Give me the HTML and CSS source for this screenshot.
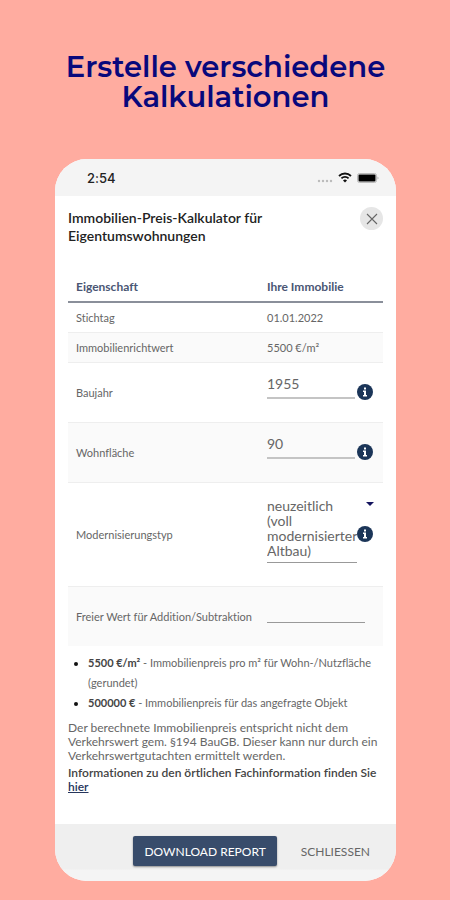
FILE: index.html
```html
<!DOCTYPE html>
<html lang="de">

<head>
    <meta charset="UTF-8">
    <meta name="viewport" content="width=device-width, initial-scale=1.0">
    <title>Immobilien-Preis-Kalkulator</title>
    <link rel="stylesheet" href="styles.css">
</head>

<body>
    <h1>Erstelle verschiedene Kalkulationen</h1>

    <main class="phone">
        <div class="status-bar">
            <span class="time">2:54</span>
            <div class="status-icons">
                <svg class="signal" width="16" height="4" viewBox="0 0 16 4" fill="#bbb">
                    <circle cx="2" cy="2" r="1.2"/>
                    <circle cx="6" cy="2" r="1.2"/>
                    <circle cx="10" cy="2" r="1.2"/>
                    <circle cx="14" cy="2" r="1.2"/>
                </svg>
                <svg width="14" height="11" viewBox="0 0 14 11" fill="none" stroke="#111" stroke-width="1.8">
                    <path d="M1 4a8.5 8.5 0 0 1 12 0"/>
                    <path d="M3.4 6.4a5.1 5.1 0 0 1 7.2 0"/>
                    <path d="M7 10.6L5 8.4a3 3 0 0 1 4 0z" fill="#111" stroke="none"/>
                </svg>
                <svg width="22" height="10" viewBox="0 0 22 10">
                    <rect x="0.5" y="0.5" width="19" height="9" rx="2" fill="none" stroke="#bbb"/>
                    <rect x="1.5" y="1.5" width="17" height="7" rx="1" fill="#000"/>
                    <path d="M20.5 3.5v3q1-.5 1-1.5t-1-1.5z" fill="#aaa"/>
                </svg>
            </div>
        </div>

        <header class="dialog-header">
            <h2>Immobilien-Preis-Kalkulator für Eigentumswohnungen</h2>
            <button class="close" type="button" aria-label="Dialog schließen">
                <svg width="12" height="12" viewBox="0 0 12 12" stroke="#666" stroke-width="1.1">
                    <path d="M1 1l10 10M11 1L1 11"/>
                </svg>
            </button>
        </header>

        <section class="content">
            <table>
                <thead>
                    <tr>
                        <th>Eigenschaft</th>
                        <th>Ihre Immobilie</th>
                    </tr>
                </thead>
                <tbody>
                    <tr>
                        <td>Stichtag</td>
                        <td>01.01.2022</td>
                    </tr>
                    <tr>
                        <td>Immobilienrichtwert</td>
                        <td>5500 €/m²</td>
                    </tr>
                    <tr class="medium">
                        <td><label for="baujahr">Baujahr</label></td>
                        <td>
                            <div class="field">
                                <input type="text" id="baujahr" value="1955">
                                <button class="info" type="button" aria-label="Info zum Baujahr">
                                    <svg width="16" height="16" viewBox="0 0 16 16">
                                        <circle cx="8" cy="8" r="8" fill="#1b3558"/>
                                        <path d="M7 3.5h2v2H7zM6 6.5h3v4.5h1v1.5H6V11h1V8H6z" fill="#fff"/>
                                    </svg>
                                </button>
                            </div>
                        </td>
                    </tr>
                    <tr class="medium">
                        <td><label for="flaeche">Wohnfläche</label></td>
                        <td>
                            <div class="field">
                                <input type="text" id="flaeche" value="90">
                                <button class="info" type="button" aria-label="Info zur Wohnfläche">
                                    <svg width="16" height="16" viewBox="0 0 16 16">
                                        <circle cx="8" cy="8" r="8" fill="#1b3558"/>
                                        <path d="M7 3.5h2v2H7zM6 6.5h3v4.5h1v1.5H6V11h1V8H6z" fill="#fff"/>
                                    </svg>
                                </button>
                            </div>
                        </td>
                    </tr>
                    <tr class="tall">
                        <td><label for="typ">Modernisierungstyp</label></td>
                        <td>
                            <div class="field">
                                <select id="typ">
                                    <option selected>neuzeitlich (voll modernisierter Altbau)</option>
                                </select>
                                <button class="info" type="button" aria-label="Info zum Modernisierungstyp">
                                    <svg width="16" height="16" viewBox="0 0 16 16">
                                        <circle cx="8" cy="8" r="8" fill="#1b3558"/>
                                        <path d="M7 3.5h2v2H7zM6 6.5h3v4.5h1v1.5H6V11h1V8H6z" fill="#fff"/>
                                    </svg>
                                </button>
                                <svg class="arrow" width="8" height="4" viewBox="0 0 8 4">
                                    <path d="M0 0h8L4 4z" fill="#14145f"/>
                                </svg>
                            </div>
                        </td>
                    </tr>
                    <tr class="medium">
                        <td><label for="frei">Freier Wert für Addition/Subtraktion</label></td>
                        <td>
                            <div class="field free">
                                <input type="text" id="frei">
                            </div>
                        </td>
                    </tr>
                </tbody>
            </table>

            <ul>
                <li><b>5500 €/m²</b> - Immobilienpreis pro m² für Wohn-/Nutzfläche (gerundet)</li>
                <li><b>500000 €</b> - Immobilienpreis für das angefragte Objekt</li>
            </ul>
            <p>Der berechnete Immobilienpreis entspricht nicht dem Verkehrswert gem. §194 BauGB. Dieser kann nur durch ein Verkehrswertgutachten ermittelt werden.</p>
            <p class="more">Informationen zu den örtlichen Fachinformation finden Sie <a href="#">hier</a></p>
        </section>

        <footer>
            <button class="download" type="button">DOWNLOAD REPORT</button>
            <button class="dismiss" type="button">SCHLIESSEN</button>
        </footer>
    </main>
</body>

</html>
```

FILE: styles.css
```css
* {
    box-sizing: border-box;
}

body {
    margin: 0;
    padding: 52px 54px 19px 55px;
    background-color: #ffaca0;
    font-family: Lato, sans-serif;
    font-size: 11px;
    font-variant-ligatures: none;
    color: #666;
}

h1 {
    margin: 0 -20px 47px;
    font-family: Montserrat, Inter, sans-serif;
    font-size: 29px;
    line-height: 30px;
    font-weight: 600;
    text-align: center;
    color: #08087c;
}

.phone {
    background-color: #fff;
    border-radius: 32px;
    overflow: hidden;
}

.status-bar {
    display: flex;
    align-items: center;
    justify-content: space-between;
    height: 37px;
    padding: 0 17px 0 32px;
    background-color: #f4f4f4;
}

.time {
    font-family: Inter, sans-serif;
    font-size: 13px;
    font-weight: 500;
    color: #222;
}

.status-icons {
    display: flex;
    align-items: center;
    gap: 5px;
}

.signal {
    align-self: flex-end;
}

.dialog-header {
    display: flex;
    justify-content: space-between;
    padding: 13px 13px 14px;
}

h2 {
    width: 220px;
    margin: 0;
    font-size: 14px;
    line-height: 18px;
    font-weight: 600;
    color: #222;
}

button {
    border: 0;
    padding: 0;
    background: none;
    font-family: inherit;
    cursor: pointer;
}

.close {
    display: flex;
    align-items: center;
    justify-content: center;
    width: 23px;
    height: 23px;
    margin-top: -2px;
    border-radius: 50%;
    background-color: #e6e6e6;
}

.content {
    padding: 13px 13px 30px;
}

table {
    width: 100%;
    table-layout: fixed;
    border-collapse: collapse;
}

th, td {
    height: 30px;
    padding: 0 8px;
    text-align: left;
}

th {
    border-bottom: 2px solid #8a8f9a;
    font-size: 12px;
    font-weight: 700;
    color: #4a5674;
}

th:first-child {
    width: 191px;
}

th:last-child {
    white-space: nowrap;
}

td {
    border-bottom: 1px solid #eee;
}

td:first-child {
    padding-right: 0;
    white-space: nowrap;
}

tbody tr:nth-child(even) {
    background-color: #fafafa;
}

tbody tr:last-child td {
    border-bottom: 0;
}

.medium td {
    height: 60px;
}

.tall td {
    height: 104px;
}

.field {
    position: relative;
    display: flex;
    align-items: center;
    gap: 2px;
}

.field input, .field select {
    flex: none;
    width: 88px;
    margin: 0;
    border: 0;
    border-bottom: 2px solid #c4c4c4;
    border-radius: 0;
    padding: 0 0 4px;
    background: none;
    font-family: inherit;
    font-size: 14px;
    color: #666;
    outline: none;
}

.field input {
    height: 26px;
    margin-bottom: 12px;
}

.field select {
    appearance: none;
    width: 90px;
    height: auto;
    margin: 0 -2px 8px 0;
    border-bottom: 1px solid #999;
    line-height: 15px;
    white-space: normal;
}

.field.free input {
    width: 98px;
    border-bottom: 1px solid #999;
}

.info {
    flex: none;
    height: 16px;
}

.info svg {
    display: block;
}

.arrow {
    position: absolute;
    top: 4px;
    right: 1px;
}

ul {
    margin: 7px 0 8px;
    padding-left: 20px;
    line-height: 20px;
}

li::marker {
    color: #111;
}

b {
    color: #444;
}

p {
    margin: 0;
    font-size: 12px;
    line-height: 14px;
}

.more {
    margin-top: 3px;
    font-weight: 600;
    color: #444;
}

.more a {
    color: #26365c;
}

footer {
    display: flex;
    align-items: center;
    justify-content: flex-end;
    gap: 24px;
    padding: 12px 26px 15px;
    background: linear-gradient(#efefef 45px, #f4f4f4 46px);
}

footer button {
    height: 30px;
    font-size: 12px;
    color: #666;
}

footer .download {
    padding: 0 11px;
    border-radius: 2px;
    background-color: #384c6b;
    box-shadow: 0 1px 2px rgba(0, 0, 0, 0.4);
    color: #fff;
}
```
